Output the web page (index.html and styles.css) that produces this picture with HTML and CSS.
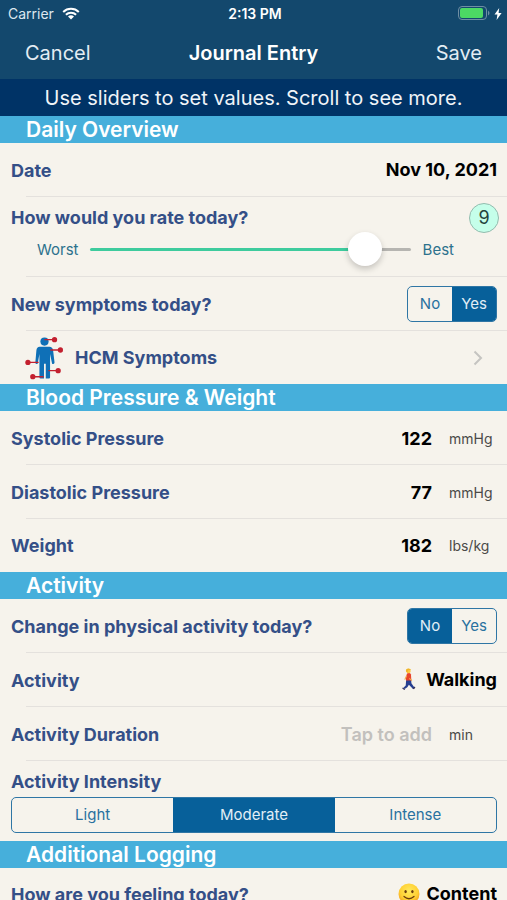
FILE: index.html
```html
<!DOCTYPE html>
<html lang="en">
<head>
<meta charset="utf-8">
<meta name="viewport" content="width=device-width, initial-scale=1">
<title>Journal Entry</title>
<link rel="stylesheet" href="styles.css">
</head>
<body>
<header class="top">
  <div class="status">
    <div class="status-left">
      <span>Carrier</span>
      <svg class="wifi" viewBox="0 0 18 13" aria-hidden="true">
        <path d="M1.2 5A11.2 11.2 0 0 1 16.8 5" />
        <path d="M3.9 7.8A7.2 7.2 0 0 1 14.1 7.8" />
        <path class="solid" d="M9 12.6 6 9.6A4.3 4.3 0 0 1 12 9.6Z" />
      </svg>
    </div>
    <span class="clock">2:13 PM</span>
    <div class="status-right">
      <svg class="battery" viewBox="0 0 32 15" aria-hidden="true">
        <rect class="shell" x="0.5" y="0.5" width="28" height="13" rx="3.5" />
        <rect class="charge" x="2" y="2" width="23" height="10" rx="2" />
        <path class="cap" d="M30 4.5Q31.5 5.5 31.5 7T30 9.5Z" />
      </svg>
      <svg class="bolt" viewBox="0 0 8 12" aria-hidden="true"><path d="M5.2 0 .5 6.6H3.4L2.6 12 7.6 4.9H4.6Z" /></svg>
    </div>
  </div>
  <nav class="nav">
    <button type="button" class="nav-button">Cancel</button>
    <h1>Journal Entry</h1>
    <button type="button" class="nav-button nav-save">Save</button>
  </nav>
</header>
<p class="hint">Use sliders to set values. Scroll to see more.</p>
<main>
  <section>
    <h2>Daily Overview</h2>
    <div class="row">
      <span class="label" id="date-label">Date</span>
      <button type="button" class="value" aria-labelledby="date-label date-value"><span id="date-value">Nov 10, 2021</span></button>
    </div>
    <div class="row row-tall">
      <div class="line">
        <label class="label" for="rating">How would you rate today?</label>
        <output class="score" for="rating">9</output>
      </div>
      <div class="slider">
        <span>Worst</span>
        <input type="range" id="rating" min="0" max="10" value="9">
        <span>Best</span>
      </div>
    </div>
    <div class="row">
      <span class="label" id="symptoms-label">New symptoms today?</span>
      <div class="segments segments-small" role="radiogroup" aria-labelledby="symptoms-label">
        <label><input type="radio" name="symptoms"><span>No</span></label>
        <label><input type="radio" name="symptoms" checked><span>Yes</span></label>
      </div>
    </div>
    <a class="row row-link" href="#symptoms">
      <svg class="person" viewBox="0 0 40 44" aria-hidden="true">
        <g class="body">
          <circle cx="20" cy="5.2" r="4.2" />
          <path d="M15 10.4H25Q28.3 10.4 28.8 14L30.3 26.5Q30 28.8 27.8 28L25.7 18V42Q25.7 43 24.5 43H21.3V28H19.5V43H16Q14.8 43 14.8 42V18L13 27.8Q10.8 28.8 10.6 26.5L11.7 14Q12.1 10.4 15 10.4Z" />
        </g>
        <g class="pins">
          <path d="M20 3.2H30M26 13.8H36M3 26.5H14M24 35H34M8 41.2H19" />
          <circle cx="30.3" cy="3.2" r="2.7" />
          <circle cx="36.3" cy="13.8" r="2.7" />
          <circle cx="3" cy="26.5" r="2.7" />
          <circle cx="34" cy="35" r="2.7" />
          <circle cx="8" cy="41.2" r="2.7" />
        </g>
      </svg>
      <span class="label">HCM Symptoms</span>
      <svg class="chevron" viewBox="0 0 10 16" aria-hidden="true"><path d="M1.5 1.5 8 8 1.5 14.5" /></svg>
    </a>
  </section>
  <section>
    <h2>Blood Pressure &amp; Weight</h2>
    <div class="row">
      <label class="label" for="systolic">Systolic Pressure</label>
      <input class="number" id="systolic" type="text" inputmode="numeric" value="122">
      <span class="unit">mmHg</span>
    </div>
    <div class="row">
      <label class="label" for="diastolic">Diastolic Pressure</label>
      <input class="number" id="diastolic" type="text" inputmode="numeric" value="77">
      <span class="unit">mmHg</span>
    </div>
    <div class="row">
      <label class="label" for="weight">Weight</label>
      <input class="number" id="weight" type="text" inputmode="numeric" value="182">
      <span class="unit">lbs/kg</span>
    </div>
  </section>
  <section>
    <h2>Activity</h2>
    <div class="row">
      <span class="label" id="change-label">Change in physical activity today?</span>
      <div class="segments segments-small" role="radiogroup" aria-labelledby="change-label">
        <label><input type="radio" name="change" checked><span>No</span></label>
        <label><input type="radio" name="change"><span>Yes</span></label>
      </div>
    </div>
    <div class="row">
      <span class="label" id="activity-label">Activity</span>
      <button type="button" class="value" aria-labelledby="activity-label activity-value">
        <svg class="walker" viewBox="0 0 14 22" aria-hidden="true">
          <path fill="#263f91" d="M4.2 11.5 9.2 11.8 9.4 15.2 12.4 19.4 10.8 20.7 6.9 16.8 5.3 19.2 2.7 21 1.4 19.8 3.7 17.5Z" />
          <path fill="#e8452c" d="M5 5.4Q8 4.4 9 6.4L9.3 12.6H4L4 9Z" />
          <path fill="none" stroke="#f4a64b" stroke-width="1.1" stroke-linecap="round" d="M4.5 8 3 11.2M7.2 8 7.8 11 9.6 12.2" />
          <path fill="#e8452c" d="M5.9 5.8 8 6 8.3 10 6.4 10.2Z" />
          <circle cx="6.5" cy="3" r="2.2" fill="#ffc83d" />
          <path fill="#f0b62a" d="M4 3.4Q3.4.3 6.6.4 8.8.5 8.9 2L6 2.3 5.5 4.8Z" />
          <path fill="#333058" d="M.8 19.4 3.2 21.2 2.3 22 .2 20.6ZM10.5 20.5 12.6 18.6 13.4 19.5 12 21.3Z" />
        </svg>
        <span id="activity-value">Walking</span>
      </button>
    </div>
    <div class="row">
      <label class="label" for="duration">Activity Duration</label>
      <input class="number" id="duration" type="text" inputmode="numeric" placeholder="Tap to add">
      <span class="unit">min</span>
    </div>
    <div class="row row-tall row-intensity">
      <span class="label" id="intensity-label">Activity Intensity</span>
      <div class="segments" role="radiogroup" aria-labelledby="intensity-label">
        <label><input type="radio" name="intensity"><span>Light</span></label>
        <label><input type="radio" name="intensity" checked><span>Moderate</span></label>
        <label><input type="radio" name="intensity"><span>Intense</span></label>
      </div>
    </div>
  </section>
  <section>
    <h2>Additional Logging</h2>
    <div class="row">
      <span class="label" id="feeling-label">How are you feeling today?</span>
      <button type="button" class="value value-feeling" aria-labelledby="feeling-label feeling-value">
        <svg class="smiley" viewBox="0 0 22 22" aria-hidden="true">
          <defs><radialGradient id="face" cx="50%" cy="35%" r="65%"><stop offset="0" stop-color="#ffe95c" /><stop offset=".65" stop-color="#ffd034" /><stop offset="1" stop-color="#f39a1c" /></radialGradient></defs>
          <circle cx="11" cy="11" r="10.5" fill="url(#face)" />
          <ellipse cx="7.6" cy="8.6" rx="1.2" ry="1.7" fill="#6b3c0c" />
          <ellipse cx="14.4" cy="8.6" rx="1.2" ry="1.7" fill="#6b3c0c" />
          <path d="M6 13.5Q11 18 16 13.5" fill="none" stroke="#6b3c0c" stroke-width="1.2" stroke-linecap="round" />
        </svg>
        <span id="feeling-value">Content</span>
      </button>
    </div>
  </section>
</main>
</body>
</html>
```
FILE: styles.css
```css
* {
  box-sizing: border-box;
}

body {
  margin: 0;
  background: #f6f3ec;
  color: #000;
  font-family: Inter, "Liberation Sans", sans-serif;
  font-size: 18px;
}

button,
input {
  margin: 0;
  padding: 0;
  border: 0;
  background: none;
  color: inherit;
  font: inherit;
}

h1,
h2,
p {
  margin: 0;
}

.top {
  background: #13486d;
  color: #fff;
}

.status {
  display: grid;
  grid-template-columns: 1fr auto 1fr;
  align-items: center;
  height: 27px;
  padding: 0 5px 0 8px;
  font-size: 14px;
}

.status-left,
.status-right {
  display: flex;
  align-items: center;
  gap: 8px;
  color: #dde7ef;
}

.status-right {
  justify-content: flex-end;
  gap: 4px;
}

.clock {
  font-weight: 600;
}

.wifi {
  width: 18px;
  height: 13px;
  fill: none;
  stroke: #fff;
  stroke-width: 2;
}

.wifi .solid {
  fill: #fff;
  stroke: none;
}

.battery {
  width: 32px;
  height: 15px;
}

.shell {
  fill: none;
  stroke: #6f8ea3;
}

.charge {
  fill: #4cd964;
}

.cap {
  fill: #6f8ea3;
}

.bolt {
  width: 8px;
  height: 12px;
  fill: #fff;
}

.nav {
  display: grid;
  grid-template-columns: 1fr auto 1fr;
  align-items: center;
  height: 52px;
  padding: 0 25px;
}

.nav h1 {
  font-size: 20px;
  font-weight: 600;
}

.nav-button {
  justify-self: start;
  color: #e3edf4;
  font-size: 20px;
}

.nav-save {
  justify-self: end;
}

.hint {
  height: 37px;
  background: #003366;
  color: #f0f4f8;
  font-size: 20px;
  line-height: 38px;
  text-align: center;
}

h2 {
  height: 27px;
  padding-left: 26px;
  background: #46afdb;
  color: #fff;
  font-size: 21px;
  font-weight: 600;
  line-height: 27px;
}

.row {
  display: flex;
  align-items: center;
  height: 54px;
  padding: 0 10px 0 11px;
  background: linear-gradient(#e4e1dd, #e4e1dd) 26px 100% / 100% 1px no-repeat;
}

.row:last-child {
  height: 53px;
  background: none;
}

.label {
  color: #344f87;
  font-weight: 700;
}

.value {
  display: flex;
  align-items: center;
  gap: 10px;
  margin-left: auto;
  padding-bottom: 2px;
  font-weight: 700;
}

.value-feeling {
  gap: 7px;
}

.row-tall,
.row-tall:last-child {
  flex-direction: column;
  align-items: stretch;
  height: 80px;
}

.line {
  display: flex;
  align-items: center;
  justify-content: space-between;
  padding-top: 6px;
}

.line .label {
  padding-bottom: 2px;
}

.score {
  width: 30px;
  height: 30px;
  margin-right: -2px;
  border: 1px solid #93bcae;
  border-radius: 50%;
  background: #c5ffea;
  color: #24453d;
  line-height: 28px;
  text-align: center;
}

.slider {
  display: flex;
  align-items: center;
  gap: 12px;
  margin-top: -1px;
  padding: 0 43px 0 26px;
  color: #2c718c;
  font-size: 15px;
}

.slider input {
  flex: 1;
  min-width: 0;
  height: 34px;
  appearance: none;
}

.slider input::-webkit-slider-runnable-track {
  height: 3px;
  border-radius: 2px;
  background: linear-gradient(90deg, #3ecb9d 86%, #b6b5b1 86%);
}

.slider input::-webkit-slider-thumb {
  width: 34px;
  height: 34px;
  margin-top: -16px;
  border-radius: 50%;
  background: #fff;
  box-shadow: 0 3px 6px rgba(0, 0, 0, 0.2);
  appearance: none;
}

.segments {
  display: flex;
  height: 36px;
  overflow: hidden;
  border: 1px solid #2f76a5;
  border-radius: 5px;
  color: #29719f;
  font-size: 15px;
}

.segments-small {
  width: 90px;
  margin-left: auto;
}

.segments label {
  display: flex;
  flex: 1;
}

.segments input {
  width: 0;
  appearance: none;
}

.segments span {
  flex: 1;
  line-height: 34px;
  text-align: center;
}

.segments input:checked + span {
  background: #07609a;
  color: #e1eef6;
}

.row-link {
  gap: 11px;
  padding: 0 24px 0 25px;
  text-decoration: none;
}

.person {
  width: 39px;
  height: 44px;
}

.body {
  fill: #0f70b7;
}

.pins {
  fill: #c3202f;
}

.pins path {
  stroke: #c3202f;
  stroke-width: 1.4;
}

.chevron {
  width: 10px;
  height: 16px;
  margin-left: auto;
  fill: none;
  stroke: #c5c4c1;
  stroke-width: 2;
}

.number {
  flex: 1;
  min-width: 0;
  font-weight: 700;
  text-align: right;
}

.number::placeholder {
  color: #c2c0bd;
  font-weight: 600;
  opacity: 1;
}

.unit {
  width: 65px;
  padding-left: 17px;
  color: #4b4a48;
  font-size: 14px;
}

.row-intensity {
  padding-top: 8px;
}

.row-intensity .label {
  margin-bottom: 2px;
  line-height: 26px;
}

.walker {
  width: 14px;
  height: 22px;
}

.smiley {
  width: 22px;
  height: 22px;
}
```
